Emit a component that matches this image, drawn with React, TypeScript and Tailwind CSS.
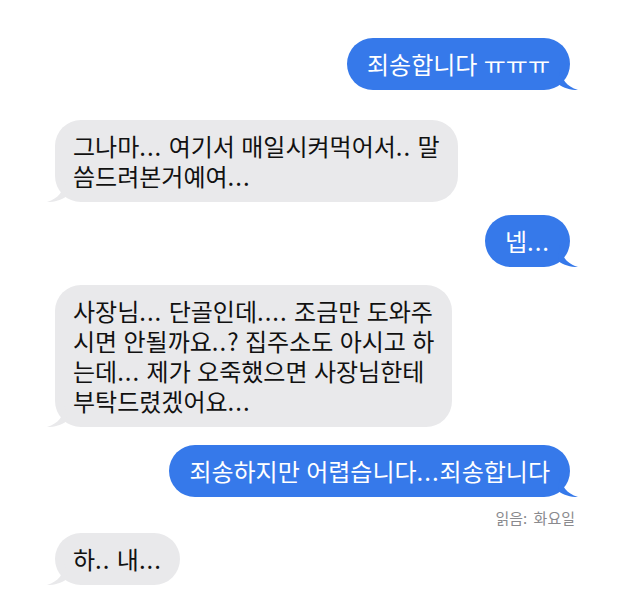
import type { ReactNode } from "react";

const font = { fontFamily: '"Noto Sans CJK KR", "Noto Sans", sans-serif' };

// dots in the original are set a bit wider than Noto's
function fmt(text: string): ReactNode[] {
  return text.split(/(\.+)/).map((part, i) =>
    part.startsWith(".") ? (
      <span key={i} className="tracking-[1px]">
        {part}
      </span>
    ) : (
      part
    )
  );
}

function Sent({ lines }: { lines: string[] }) {
  return (
    <div className="flex justify-end">
      <div className="relative rounded-[26px] bg-[#3679ea] px-[20px] py-[11px] text-[24px] leading-[30px] whitespace-nowrap text-white [word-spacing:1px]">
        {lines.map((l, i) => (
          <div key={i}>{fmt(l)}</div>
        ))}
        <svg
          className="absolute bottom-0 right-[-10px]"
          width="22"
          height="22"
          viewBox="0 0 22 22"
        >
          <path d="M2 0 C4 12 8 18 20 22 C12 22 6 20 0 16 Z" fill="#3679ea" />
        </svg>
      </div>
    </div>
  );
}

function Received({ lines }: { lines: string[] }) {
  return (
    <div className="flex justify-start">
      <div className="relative rounded-[26px] bg-[#e9e9eb] px-[18px] py-[11px] text-[24px] leading-[30px] whitespace-nowrap text-[#111] [word-spacing:1px]">
        {lines.map((l, i) => (
          <div key={i}>{fmt(l)}</div>
        ))}
        <svg
          className="absolute bottom-0 left-[-10px]"
          width="22"
          height="22"
          viewBox="0 0 22 22"
        >
          <path d="M20 0 C18 12 14 18 2 22 C10 22 16 20 22 16 Z" fill="#e9e9eb" />
        </svg>
      </div>
    </div>
  );
}

export default function App() {
  return (
    <div className="h-[608px] w-[640px] overflow-hidden bg-white" style={font}>
      <div className="flex flex-col pl-[55px] pr-[70px] pt-[38px]">
        <Sent lines={["죄송합니다 ㅠㅠㅠ"]} />
        <div className="mt-[30px]">
          <Received lines={["그나마... 여기서 매일시켜먹어서.. 말", "씀드려본거예여..."]} />
        </div>
        <div className="mt-[13px]">
          <Sent lines={["넵..."]} />
        </div>
        <div className="mt-[18px]">
          <Received
            lines={[
              "사장님... 단골인데.... 조금만 도와주",
              "시면 안될까요..? 집주소도 아시고 하",
              "는데... 제가 오죽했으면 사장님한테",
              "부탁드렸겠어요...",
            ]}
          />
        </div>
        <div className="mt-[18px]">
          <Sent lines={["죄송하지만 어렵습니다...죄송합니다"]} />
        </div>
        <div className="mr-[-5px] mt-[12px] flex justify-end text-[15px] leading-[18px] text-[#8a8a8e] [word-spacing:3px]">
          읽음: 화요일
        </div>
        <div className="mt-[6px]">
          <Received lines={["하.. 내..."]} />
        </div>
      </div>
    </div>
  );
}
